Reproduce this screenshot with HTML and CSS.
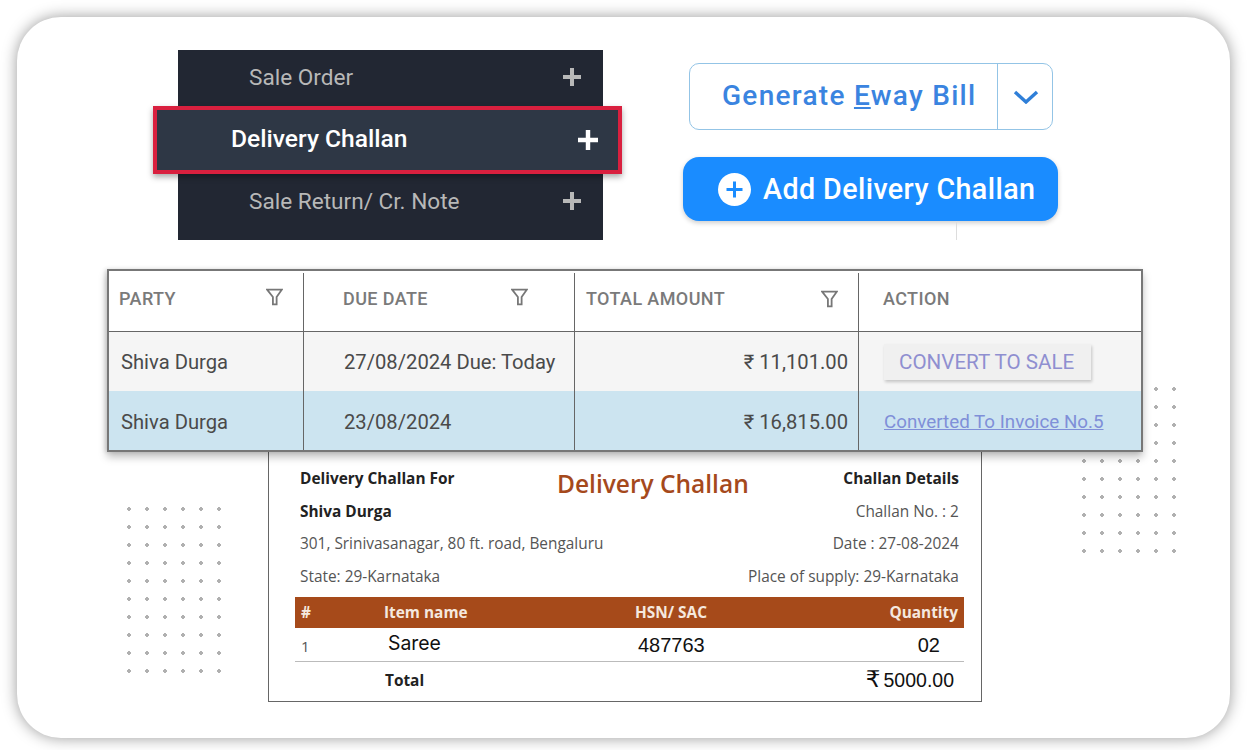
FILE: index.html
```html
<!DOCTYPE html>
<html lang="en">
<head>
  <meta charset="UTF-8">
  <meta name="viewport" content="width=device-width, initial-scale=1.0">
  <title>Delivery Challan</title>
  <link rel="stylesheet" href="styles.css">
</head>
<body>
  <div class="card">
    <div class="dots dots-left"></div>
    <div class="dots dots-right"></div>

    <div class="menu">
      <div class="menu-row">
        <span>Sale Order</span>
        <svg class="plus" viewBox="0 0 18 18"><path d="M7 0h4v7h7v4h-7v7H7v-7H0V7h7z"/></svg>
      </div>
      <div class="menu-row menu-row-last">
        <span>Sale Return/ Cr. Note</span>
        <svg class="plus" viewBox="0 0 18 18"><path d="M7 0h4v7h7v4h-7v7H7v-7H0V7h7z"/></svg>
      </div>
    </div>
    <div class="menu-active">
      <span>Delivery Challan</span>
      <svg class="plus" viewBox="0 0 18 18"><path d="M7 0h4v7h7v4h-7v7H7v-7H0V7h7z"/></svg>
    </div>

    <div class="eway">
      <div class="eway-label">Generate <u>E</u>way Bill</div>
      <div class="eway-arrow">
        <svg width="26" height="14" viewBox="0 0 26 14"><path d="M2 2l11 10L24 2" fill="none" stroke="#2f7fd8" stroke-width="3.4"/></svg>
      </div>
    </div>

    <div class="add-btn">
      <svg width="33" height="33" viewBox="0 0 33 33"><circle cx="16.5" cy="16.5" r="16.5" fill="#fff"/><path d="M16.5 8.5v16M8.5 16.5h16" stroke="#1a8cff" stroke-width="3"/></svg>
      <span>Add Delivery Challan</span>
    </div>
    <div class="tick"></div>

    <div class="invoice">
      <div class="inv-top">
        <div class="inv-left">
          <p class="b">Delivery Challan For</p>
          <p class="b">Shiva Durga</p>
          <p>301, Srinivasanagar, 80 ft. road, Bengaluru</p>
          <p>State: 29-Karnataka</p>
        </div>
        <h2>Delivery Challan</h2>
        <div class="inv-right">
          <p class="b">Challan Details</p>
          <p>Challan No. : 2</p>
          <p>Date : 27-08-2024</p>
          <p>Place of supply: 29-Karnataka</p>
        </div>
      </div>
      <div class="inv-table">
        <div class="inv-row inv-head">
          <div>#</div>
          <div>Item name</div>
          <div>HSN/ SAC</div>
          <div class="qty">Quantity</div>
        </div>
        <div class="inv-row inv-item">
          <div class="num">1</div>
          <div class="name">Saree</div>
          <div class="hsn">487763</div>
          <div class="qty">02</div>
        </div>
        <div class="inv-row inv-total">
          <div></div>
          <div class="b total">Total</div>
          <div></div>
          <div class="sum"><span class="rupee">₹</span>5000.00</div>
        </div>
      </div>
    </div>

    <div class="table">
      <div class="t-row t-head">
        <div class="cell">PARTY
          <svg class="filter" viewBox="0 0 16 17"><path d="M1 1.5h14L10 8.5v7H6.5v-7z"/></svg>
        </div>
        <div class="cell">DUE DATE
          <svg class="filter" viewBox="0 0 16 17"><path d="M1 1.5h14L10 8.5v7H6.5v-7z"/></svg>
        </div>
        <div class="cell">TOTAL AMOUNT
          <svg class="filter filter-low" viewBox="0 0 16 17"><path d="M1 1.5h14L10 8.5v7H6.5v-7z"/></svg>
        </div>
        <div class="cell">ACTION</div>
      </div>
      <div class="t-row t-odd">
        <div class="cell">Shiva Durga</div>
        <div class="cell date">27/08/2024 Due: Today</div>
        <div class="cell amount">₹ 11,101.00</div>
        <div class="cell"><span class="convert">CONVERT TO SALE</span></div>
      </div>
      <div class="t-row t-even">
        <div class="cell">Shiva Durga</div>
        <div class="cell date">23/08/2024</div>
        <div class="cell amount">₹ 16,815.00</div>
        <div class="cell"><a class="converted" href="#">Converted To Invoice No.5</a></div>
      </div>
    </div>
  </div>
</body>
</html>
```

FILE: styles.css
```css
html, body {
  margin: 0;
  height: 100%;
  background-color: white;
  overflow: hidden;
}
body {
  font-family: Roboto, sans-serif;
  padding: 17px 20px 12px 17px;
  box-sizing: border-box;
}
p, h2 {
  margin: 0;
}

/* the white card, everything on it is a collage so pieces are placed on it */
.card {
  position: relative;
  width: 1213px;
  height: 721px;
  background-color: white;
  border-radius: 44px;
  box-shadow: 0 0 15px rgba(0, 0, 0, 0.4);
}
.dots {
  position: absolute;
  width: 108px;
  height: 180px;
  background-image: radial-gradient(circle at 9px 9px, #b0b0b0 1.6px, transparent 2px);
  background-size: 18px 18px;
}
.dots-left {
  left: 103px;
  top: 483px;
}
.dots-right {
  left: 1058px;
  top: 363px;
}

/* sidebar piece */
.menu {
  position: absolute;
  left: 161px;
  top: 33px;
  width: 425px;
  height: 190px;
  background-color: #222733;
  color: #b8b8b8;
  font-size: 22.6px;
}
.menu-row {
  height: 54px;
  display: flex;
  align-items: center;
  justify-content: space-between;
  padding: 0 22px 0 71px;
}
.menu-row-last {
  margin-top: 70px;
}
.plus {
  width: 18px;
  height: 18px;
  fill: currentColor;
}
.menu-active {
  position: absolute;
  left: 136px;
  top: 89px;
  width: 469px;
  height: 68px;
  box-sizing: border-box;
  border: 4px solid #d9203f;
  background-color: #2e3745;
  box-shadow: 0 3px 6px rgba(0, 0, 0, 0.35);
  color: white;
  font-size: 24.6px;
  font-weight: 500;
  display: flex;
  align-items: center;
  justify-content: space-between;
  padding: 0 20px 3px 74px;
}
.menu-active .plus {
  width: 20px;
  height: 20px;
  margin-top: 3px;
}

/* buttons */
.eway {
  position: absolute;
  left: 672px;
  top: 46px;
  width: 364px;
  height: 67px;
  box-sizing: border-box;
  border: 1.5px solid #93c4e6;
  border-radius: 10px;
  display: flex;
  color: #3a84e0;
}
.eway-label {
  width: 308px;
  box-sizing: border-box;
  border-right: 1.5px solid #93c4e6;
  padding-left: 32px;
  font-size: 28px;
  font-weight: 500;
  letter-spacing: 1.28px;
  line-height: 64px;
}
.eway-arrow {
  flex: 1;
  display: flex;
  align-items: center;
  justify-content: center;
  padding-left: 2px;
}
.add-btn {
  position: absolute;
  left: 666px;
  top: 140px;
  width: 375px;
  height: 64px;
  box-sizing: border-box;
  background-color: #1a8cff;
  border-radius: 16px;
  box-shadow: 0 2px 5px rgba(0, 0, 0, 0.2);
  color: white;
  font-size: 28.7px;
  font-weight: 500;
  letter-spacing: 0.4px;
  display: flex;
  align-items: center;
  gap: 12px;
  padding-left: 35px;
}
.tick {
  position: absolute;
  left: 939px;
  top: 204px;
  width: 1px;
  height: 19px;
  background-color: #ddd;
}

/* grid table */
.table {
  position: absolute;
  left: 90px;
  top: 252px;
  width: 1036px;
  box-sizing: border-box;
  border: 2px solid #777;
  background-color: white;
  box-shadow: 0 5px 8px rgba(0, 0, 0, 0.25), -2px 0 4px rgba(0, 0, 0, 0.12);
  z-index: 2;
}
.t-row {
  display: grid;
  grid-template-columns: 194px 271px 284px 1fr;
  color: #4a4a4a;
  font-size: 20.2px;
}
.cell {
  position: relative;
  display: flex;
  align-items: center;
  padding-left: 39px;
  border-left: 1.5px solid #666;
}
.cell:first-child {
  border-left: none;
  padding-left: 12px;
}
.cell:nth-child(3) {
  padding-left: 11px;
}
.cell:nth-child(4) {
  padding-left: 24px;
}
.date {
  padding-left: 40px;
}
.t-head {
  height: 58px;
  margin-top: 2px;
  border-bottom: 1.5px solid #666;
  color: #7a7a7a;
  font-size: 18px;
  font-weight: 500;
  letter-spacing: 0.4px;
}
.t-head .cell {
  padding-bottom: 8px;
}
.t-head .cell:first-child {
  padding-left: 10px;
}
.t-odd {
  height: 59px;
  background-color: #f5f5f5;
}
.t-odd .cell {
  padding-top: 1px;
}
.t-even {
  height: 59px;
  background-color: #cce4f0;
}
.t-even .cell {
  padding-top: 2px;
}
.filter {
  position: absolute;
  right: 20px;
  top: 15px;
  width: 17px;
  height: 18px;
  fill: none;
  stroke: #777;
  stroke-width: 1.7;
}
.t-head .cell:nth-child(2) .filter {
  right: 46px;
}
.filter-low {
  top: 17px;
}
.amount {
  justify-content: flex-end;
  padding-left: 0 !important;
  padding-right: 10px;
}
.convert {
  margin-left: 1px;
  background-color: #f0f0f0;
  color: #8f8fd0;
  padding: 8px 17px 8px 15px;
  box-shadow: 1px 2px 3px rgba(0, 0, 0, 0.2);
  font-size: 20.6px;
  line-height: 20px;
}
.converted {
  margin-left: 1px;
  color: #7f8fd8;
  font-size: 18.8px;
}

/* challan print */
.invoice {
  position: absolute;
  left: 251px;
  top: 432px;
  width: 714px;
  height: 253px;
  box-sizing: border-box;
  border: 1.5px solid #666;
  background-color: white;
  padding: 13px 17px 0 26px;
  font-family: "Open Sans", sans-serif;
  font-size: 15.4px;
  color: #555;
  z-index: 1;
}
.b {
  font-weight: 700;
  color: #222;
}
.inv-top {
  display: grid;
  grid-template-columns: 257px 191px 1fr;
  padding: 0 6px 0 5px;
}
.inv-top p {
  height: 32.7px;
  line-height: 32.7px;
  white-space: nowrap;
}
.inv-right {
  text-align: right;
  padding-right: 1px;
}
.inv-top h2 {
  font-size: 24.5px;
  font-weight: 600;
  color: #a5491c;
  line-height: 38px;
  padding-top: 2px;
  white-space: nowrap;
}
.inv-table {
  margin-top: 3px;
}
.inv-row {
  display: grid;
  grid-template-columns: 83px 251px 1fr 120px;
  align-items: center;
  padding: 0 6px;
}
.qty {
  text-align: right;
}
.inv-head {
  height: 31px;
  background-color: #a64a1a;
  color: #f5e8df;
  font-weight: 700;
}
.inv-item {
  height: 34px;
  border-bottom: 1.5px solid #bbb;
  font-family: "Liberation Sans", sans-serif;
  font-size: 20px;
  color: #111;
  padding-top: 3px;
  box-sizing: border-box;
}
.hsn {
  padding-left: 3px;
}
.inv-item .qty {
  padding-right: 18px;
}
.inv-item .num {
  font-family: "Open Sans", sans-serif;
  font-size: 15px;
  color: #555;
}
.inv-item .name {
  font-family: Inter, sans-serif;
  font-size: 19.4px;
  padding: 0 0 5px 4px;
}
.inv-total {
  height: 38px;
}
.total {
  padding-left: 1px;
}
.sum {
  font-family: "Liberation Sans", sans-serif;
  font-size: 19.5px;
  color: #111;
  text-align: right;
  padding-right: 4px;
  white-space: nowrap;
}
.rupee {
  font-family: "DejaVu Sans", sans-serif;
  font-size: 23px;
  font-weight: 400;
  line-height: 20px;
  margin-right: 3px;
}
```
